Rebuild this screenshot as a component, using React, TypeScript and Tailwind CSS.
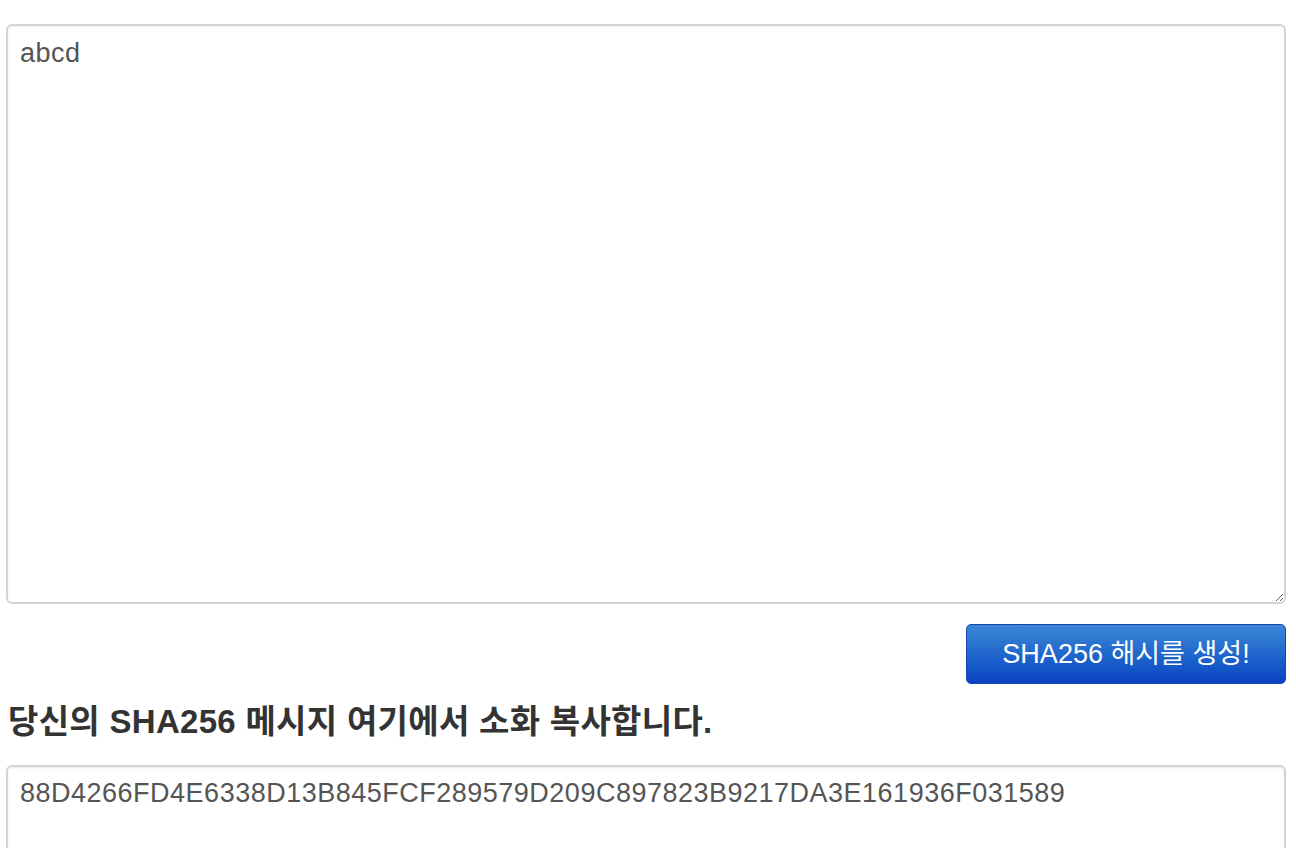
import { useState } from 'react'

const FONT = "font-['Liberation_Sans','Noto_Sans_CJK_KR',sans-serif]"

export default function App() {
  const [input, setInput] = useState('abcd')
  const hash = '88D4266FD4E6338D13B845FCF289579D209C897823B9217DA3E161936F031589'

  return (
    <div className={`${FONT} bg-white min-h-screen pl-[6px] pr-[10px] pt-[24px] text-[#333]`}>
      {/* Input */}
      <textarea
        value={input}
        onChange={(e) => setInput(e.target.value)}
        className="block w-full h-[580px] rounded-[6px] border-2 border-[#d4d4d4] shadow-[inset_0_1px_2px_rgba(0,0,0,0.08)] px-[12px] pt-[10px] pb-[8px] text-[27px] leading-[34px] tracking-[0.5px] text-[#555] outline-none resize-y"
      />

      <div className="flex justify-end mt-[20px]">
        <button
          type="button"
          className="w-[320px] h-[60px] rounded-[5px] border border-[#1546b0] bg-gradient-to-b from-[#3d87d6] to-[#0a43c2] text-white text-[27px]"
        >
          SHA256 해시를 생성!
        </button>
      </div>

      {/* Result */}
      <h3 className="mt-[18px] ml-[2px] text-[33px] leading-[40px] font-bold text-[#333] tracking-[0.3px]">
        당신의 SHA256 메시지 여기에서 소화 복사합니다.
      </h3>
      <textarea
        readOnly
        value={hash}
        className="block w-full mt-[23px] h-[200px] rounded-[6px] border-2 border-[#d4d4d4] shadow-[inset_0_1px_2px_rgba(0,0,0,0.08)] px-[12px] pt-[9px] pb-[8px] text-[27px] leading-[34px] tracking-[0.5px] text-[#555] outline-none resize-y"
      />
    </div>
  )
}
